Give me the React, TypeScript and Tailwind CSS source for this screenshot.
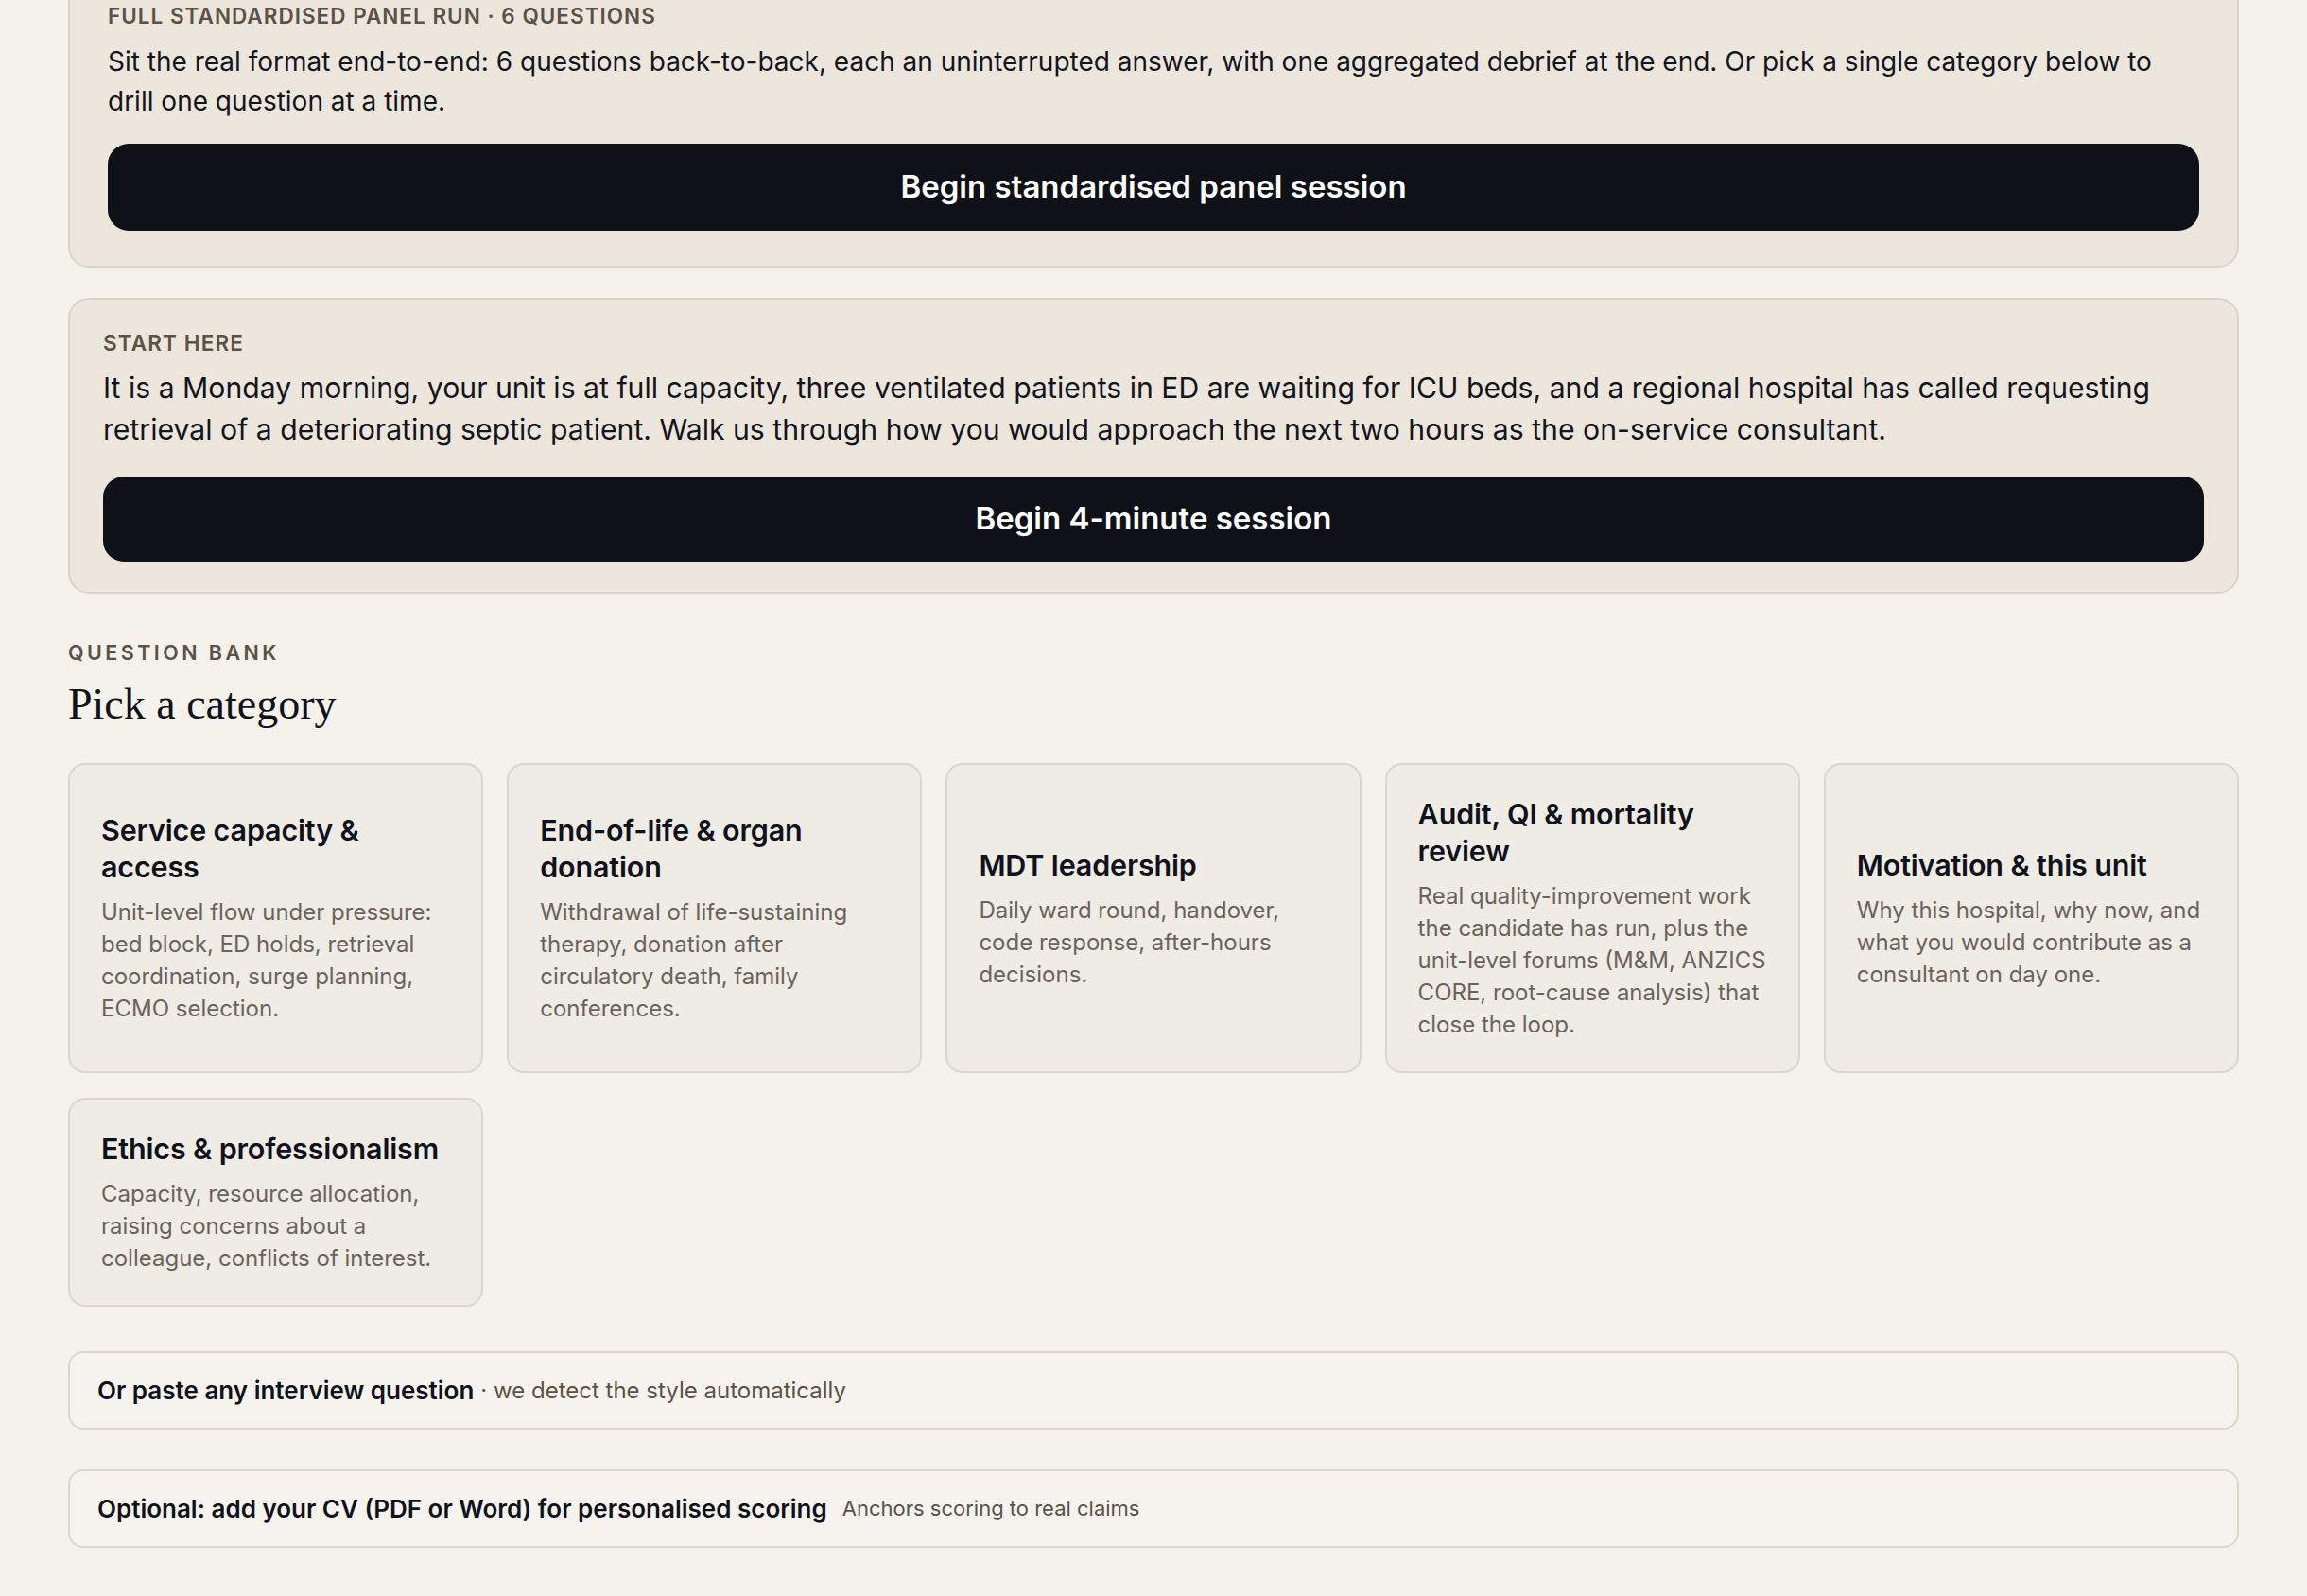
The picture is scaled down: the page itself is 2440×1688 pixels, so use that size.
import React from "react";

const categories = [
  {
    title: "Service capacity & access",
    body: "Unit-level flow under pressure: bed block, ED holds, retrieval coordination, surge planning, ECMO selection.",
  },
  {
    title: "End-of-life & organ donation",
    body: "Withdrawal of life-sustaining therapy, donation after circulatory death, family conferences.",
  },
  {
    title: "MDT leadership",
    body: "Daily ward round, handover, code response, after-hours decisions.",
  },
  {
    title: "Audit, QI & mortality review",
    body: "Real quality-improvement work the candidate has run, plus the unit-level forums (M&M, ANZICS CORE, root-cause analysis) that close the loop.",
  },
  {
    title: "Motivation & this unit",
    body: "Why this hospital, why now, and what you would contribute as a consultant on day one.",
  },
  {
    title: "Ethics & professionalism",
    body: "Capacity, resource allocation, raising concerns about a colleague, conflicts of interest.",
  },
];

const CategoryCard = ({ title, body }: { title: string; body: string }) => (
  <button className="flex flex-col justify-center text-left rounded-[18px] border-2 border-[#dcd6cc] bg-[#efebe5] px-[33px] py-[32px] hover:border-[#c9c0b2] transition-colors">
    <h3 className="text-[30.5px] leading-[39px] font-semibold text-[#0f121a] tracking-[-0.005em]">{title}</h3>
    <p className="mt-[12px] text-[24px] leading-[34px] text-[#6b635a]">{body}</p>
  </button>
);

export default function App() {
  return (
    <div
      className="min-h-screen bg-[#f5f2ec] px-[72px] pb-[52px] overflow-hidden"
      style={{ fontFamily: 'Inter, "Noto Sans", sans-serif' }}
    >
      {/* Full panel run */}
      <section className="-mt-[36px] rounded-[22px] border-2 border-[#dad3c8] bg-[#ede6dd] px-[40px] pt-[40px] pb-[37px]">
        <div className="text-[22.5px] leading-[22px] font-semibold tracking-[0.045em] text-[#5b5247] uppercase">
          Full standardised panel run · 6 questions
        </div>
        <p className="mt-[16px] text-[28px] leading-[42px] text-[#12151c]">
          Sit the real format end-to-end: 6 questions back-to-back, each an uninterrupted answer, with one aggregated
          debrief at the end. Or pick a single category below to drill one question at a time.
        </p>
        <button className="mt-[24px] flex h-[92px] w-full items-center justify-center rounded-[22px] bg-[#0e1118] text-[33px] font-semibold text-white">
          Begin standardised panel session
        </button>
      </section>

      {/* Start here */}
      <section className="mt-[32px] rounded-[22px] border-2 border-[#dad3c8] bg-[#ede6dd] px-[35px] pt-[35px] pb-[32px]">
        <div className="text-[22.5px] leading-[22px] font-semibold tracking-[0.05em] text-[#5b5247] uppercase">
          Start here
        </div>
        <p className="mt-[14px] text-[30.2px] leading-[44px] text-[#12151c]">
          It is a Monday morning, your unit is at full capacity, three ventilated patients in ED are waiting for ICU
          beds, and a regional hospital has called requesting retrieval of a deteriorating septic patient. Walk us
          through how you would approach the next two hours as the on-service consultant.
        </p>
        <button className="mt-[28px] flex h-[90px] w-full items-center justify-center rounded-[22px] bg-[#0e1118] text-[33px] font-semibold text-white">
          Begin 4-minute session
        </button>
      </section>

      {/* Question bank */}
      <div className="mt-[51px] text-[21.5px] leading-[22px] font-semibold tracking-[0.16em] text-[#5b5247] uppercase">
        Question bank
      </div>
      <h2
        className="mt-[16px] text-[46px] leading-[56px] text-[#0f121a]"
        style={{ fontFamily: '"Liberation Serif", serif' }}
      >
        Pick a category
      </h2>

      <div className="mt-[34px] grid grid-cols-5 gap-x-[25px] gap-y-[26px]">
        {categories.map((c) => (
          <CategoryCard key={c.title} title={c.title} body={c.body} />
        ))}
      </div>

      <div className="mt-[47px] flex h-[83px] items-center rounded-[16px] border-2 border-[#dcd6cc] bg-[#f6f3ee] px-[29px]">
        <span className="text-[26px] font-semibold text-[#0f121a]">Or paste any interview question</span>
        <span className="ml-[7px] text-[24px] text-[#5b5247]">· we detect the style automatically</span>
      </div>

      <div className="mt-[42px] flex h-[83px] items-center rounded-[16px] border-2 border-[#dcd6cc] bg-[#f6f3ee] px-[29px]">
        <span className="text-[26px] font-semibold text-[#0f121a]">
          Optional: add your CV (PDF or Word) for personalised scoring
        </span>
        <span className="ml-[16px] text-[22px] text-[#5b5247]">Anchors scoring to real claims</span>
      </div>
    </div>
  );
}
